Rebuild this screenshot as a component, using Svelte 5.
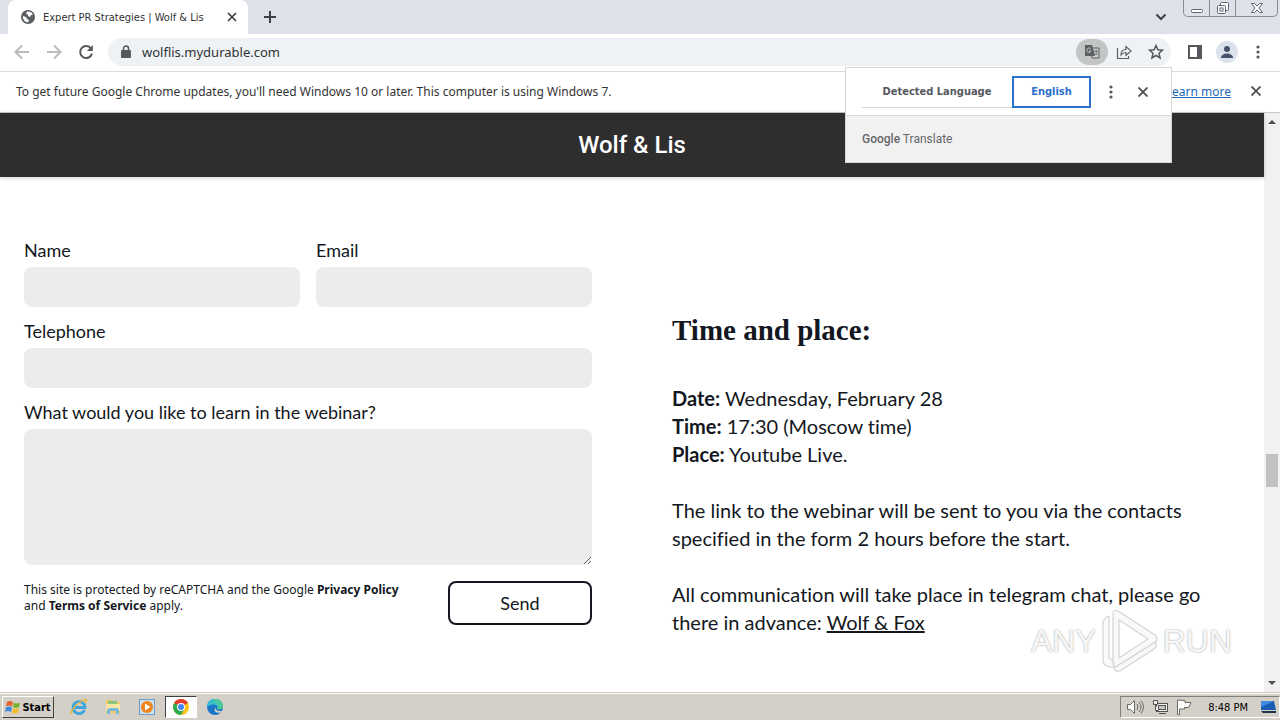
<script>
  let name = $state('');
  let email = $state('');
  let phone = $state('');
  let question = $state('');
</script>

<div class="desktop">
  <header class="tabstrip">
    <div class="tab">
      <svg width="14" height="14" viewBox="0 0 14 14"><circle cx="7" cy="7" r="7" fill="#5a5d61" /><path d="M2 6l3 1 1 2 2 1-1 2.500-3-1-2-3zM6 1.500l4 .5 2 3-2 0-1 2-2-1 0-1.500-2-.5z" fill="#fff" /></svg>
      <span class="tab-title">Expert PR Strategies | Wolf &amp; Lis</span>
      <button aria-label="Close tab"><svg width="10" height="10" viewBox="0 0 10 10"><path d="M1 1l8 8M9 1L1 9" stroke="#3c4043" stroke-width="1.700" /></svg></button>
    </div>
    <button class="newtab" aria-label="New tab"><svg width="12" height="12" viewBox="0 0 12 12"><path d="M6 0v12M0 6h12" stroke="#3c4043" stroke-width="2" /></svg></button>
    <button class="tabsearch" aria-label="Search tabs"><svg width="12" height="8" viewBox="0 0 12 8"><path d="M1.500 1.500L6 6l4.500-4.500" fill="none" stroke="#3c4043" stroke-width="2" /></svg></button>
    <div class="window-controls">
      <button aria-label="Minimize"><svg width="14" height="13" viewBox="0 0 14 13"><rect x="1.500" y="7.500" width="11" height="3" rx="1" fill="#fff" stroke="#60646c" /></svg></button>
      <button aria-label="Restore"><svg width="14" height="14" viewBox="0 0 14 14"><rect x="4.500" y="1.500" width="8" height="8" rx="1" fill="#fff" stroke="#60646c" /><rect x="1.500" y="4.500" width="8" height="8" rx="1" fill="#fff" stroke="#60646c" /><rect x="4" y="7" width="3" height="3" fill="none" stroke="#60646c" /></svg></button>
      <button class="wide" aria-label="Close"><svg width="14" height="12" viewBox="0 0 14 12"><path d="M1.500 1.500h3L7 4l2.500-2.500h3L9 6l3.500 4.500h-3L7 8l-2.500 2.500h-3L5 6z" fill="#fff" stroke="#60646c" /></svg></button>
    </div>
  </header>

  <nav class="toolbar">
    <button aria-label="Back"><svg width="16" height="16" viewBox="0 0 16 16" class="faint"><path d="M15 8H2M8 1.500L1.500 8 8 14.500" /></svg></button>
    <button aria-label="Forward"><svg width="16" height="16" viewBox="0 0 16 16" class="faint"><path d="M1 8h13M8 1.500L14.500 8 8 14.500" /></svg></button>
    <button aria-label="Reload"><svg width="16" height="16" viewBox="0 0 16 16"><path d="M13 4.500A6 6 0 1 0 14 9.500" fill="none" stroke="#55585c" stroke-width="2" /><path d="M14.800 1v6H8.800z" fill="#55585c" /></svg></button>
    <div class="omnibox">
      <svg width="10" height="13" viewBox="0 0 10 13"><rect y="5" width="10" height="8" rx="1" fill="#55585c" /><path d="M2.500 5.500V3.500a2.500 2.500 0 0 1 5 0v2" fill="none" stroke="#55585c" stroke-width="1.500" /></svg>
      <input type="text" value="wolflis.mydurable.com" aria-label="Address" />
      <button class="translate-pill" aria-label="Translate this page"><svg width="16" height="16" viewBox="0 0 16 16"><path d="M6 4h9v10H8z" fill="#c9cac9" stroke="#5b5f63" /><path d="M1 1h7l3 11H1z" fill="#5b5f63" /><path d="M6.800 5A2.200 2.200 0 1 0 7 7H5" fill="none" stroke="#c9cac9" /><path d="M9.500 7H14M12 6v1M13 7c0 2-1 3-2.500 4M11 8.500l2.500 2.500" fill="none" stroke="#5b5f63" stroke-width=".8" /></svg></button>
      <button aria-label="Share"><svg width="16" height="16" viewBox="0 0 16 16"><path d="M1.500 4v10.500h11V12M5 11c0-4 2-5.500 5-5.500V2.500L15 7l-5 4.500V8.500C8 8.500 6.500 9 5 11z" fill="none" stroke="#5b5f63" stroke-width="1.200" /></svg></button>
      <button aria-label="Bookmark this page"><svg width="16" height="16" viewBox="0 0 16 16"><path d="M8 1.500l1.900 4.300 4.600.4-3.500 3.100 1.100 4.700L8 11.500 3.900 14 5 9.300 1.500 6.200l4.600-.4z" fill="none" stroke="#55585c" stroke-width="1.500" /></svg></button>
    </div>
    <button aria-label="Side panel"><svg width="14" height="14" viewBox="0 0 14 14"><rect x="1" y="1" width="12" height="12" fill="none" stroke="#55585c" stroke-width="2" /><path d="M9 1h4v12H9z" fill="#55585c" /></svg></button>
    <button class="avatar" aria-label="Profile"><svg width="12" height="12" viewBox="0 0 12 12"><circle cx="6" cy="3" r="3" fill="#47516b" /><path d="M0 12c0-6 12-6 12 0z" fill="#47516b" /></svg></button>
    <button aria-label="Menu"><svg width="4" height="14" viewBox="0 0 4 14" fill="#55585c"><circle cx="2" cy="2" r="1.600" /><circle cx="2" cy="7" r="1.600" /><circle cx="2" cy="12" r="1.600" /></svg></button>
  </nav>

  <div class="infobar">
    <p>To get future Google Chrome updates, you'll need Windows 10 or later. This computer is using Windows 7.</p>
    <a href="#learn">Learn more</a>
    <button aria-label="Dismiss"><svg width="10" height="10" viewBox="0 0 10 10"><path d="M.5.5l9 9M9.500.5l-9 9" stroke="#4c4f53" stroke-width="1.800" /></svg></button>
  </div>

  <section class="translate" aria-label="Translate">
    <div class="languages">
      <button class="detected">Detected Language</button>
      <button class="target">English</button>
      <button class="icon" aria-label="Translate options"><svg width="4" height="14" viewBox="0 0 4 14" fill="#55585c"><circle cx="2" cy="2" r="1.600" /><circle cx="2" cy="7" r="1.600" /><circle cx="2" cy="12" r="1.600" /></svg></button>
      <button class="icon" aria-label="Close translate"><svg width="10" height="10" viewBox="0 0 10 10"><path d="M.5.5l9 9M9.500.5l-9 9" stroke="#4c4f53" stroke-width="1.800" /></svg></button>
    </div>
    <div class="brand"><b>Google</b> Translate</div>
  </section>

  <div class="viewport">
    <div class="page">
      <header class="site-header"><h1>Wolf &amp; Lis</h1></header>
      <main>
        <form onsubmit={(e) => e.preventDefault()}>
          <div class="pair">
            <div class="field"><label for="name">Name</label><input id="name" type="text" bind:value={name} /></div>
            <div class="field"><label for="email">Email</label><input id="email" type="email" bind:value={email} /></div>
          </div>
          <div class="field"><label for="phone">Telephone</label><input id="phone" type="tel" bind:value={phone} /></div>
          <div class="field"><label for="question">What would you like to learn in the webinar?</label><textarea id="question" bind:value={question}></textarea></div>
          <div class="submit">
            <p>This site is protected by reCAPTCHA and the Google <a href="#privacy">Privacy Policy</a><br />and <a href="#terms">Terms of Service</a> apply.</p>
            <button>Send</button>
          </div>
        </form>
        <article>
          <h2>Time and place:</h2>
          <p><strong>Date:</strong> Wednesday, February 28<br /><strong>Time:</strong> 17:30 (Moscow time)<br /><strong>Place:</strong> Youtube Live.</p>
          <p>The link to the webinar will be sent to you via the contacts<br />specified in the form 2 hours before the start.</p>
          <p>All communication will take place in telegram chat, please go<br />there in advance: <a href="#chat">Wolf &amp; Fox</a></p>
        </article>
      </main>
      <div class="watermark" aria-hidden="true">
        <span>ANY</span>
        <svg width="58" height="64" viewBox="0 0 58 64" fill="#f7f7f7" fill-opacity=".8" stroke="#d4d4d4" stroke-width="1.200" stroke-linejoin="round"><path d="M2 14q0-5 6-7v42l6 4v5Q2 59 2 51z" /><path fill-rule="evenodd" d="M12 5q0-5 5-3l37 24q4 4 0 8L17 57q-5 2-5-3zM18 11v38l29-19z" /><path d="M13 59l41-26q3 4-1 7L19 62q-5 1-6-3z" /></svg>
        <span>RUN</span>
      </div>
    </div>
    <div class="scrollbar">
      <svg width="8" height="4" viewBox="0 0 8 4"><path d="M0 4l4-4 4 4z" fill="#505050" /></svg>
      <div class="track"><div class="thumb"></div></div>
      <svg width="8" height="4" viewBox="0 0 8 4"><path d="M0 0l4 4 4-4z" fill="#505050" /></svg>
    </div>
  </div>

  <footer class="taskbar">
    <button class="start"><svg width="16" height="16" viewBox="0 0 16 16"><path d="M2 3q3-2 6 0L7 7.500q-3-2-6 0z" fill="#e8602c" /><path d="M9 3.500q3 2 6 0L14 8q-3 2-6 0z" fill="#78b52b" /><path d="M1 8.500q3-2 6 0L6 13q-3-2-6 0z" fill="#3b8ede" /><path d="M8 9q3 2 6 0l-1 4.500q-3 2-6 0z" fill="#f4bd27" /></svg>Start</button>
    <button class="task" aria-label="Internet Explorer"><svg width="18" height="18" viewBox="0 0 18 18"><path d="M14.500 12A6 6 0 1 1 15 9.500H5" fill="none" stroke="#3da5e1" stroke-width="2.800" /><path d="M2 15C-1 18 3 8 10 4s8-3 5 1" fill="none" stroke="#e6b52e" stroke-width="1.300" /></svg></button>
    <button class="task" aria-label="Windows Explorer"><svg width="18" height="18" viewBox="0 0 18 18"><path d="M2 2h6l1 2h7v11H2z" fill="#eccb66" /><path d="M4 3h9v4H4z" fill="#8cc47b" /><path d="M2 6h14v7H2z" fill="#f8e7a3" /><path d="M3 16v-3q0-3 3-3h6q3 0 3 3v3h-3v-3H6v3z" fill="#76b9dd" /></svg></button>
    <button class="task" aria-label="Media Player"><svg width="18" height="18" viewBox="0 0 18 18"><rect x="1.500" y="1.500" width="15" height="15" fill="#c8e1f3" stroke="#719dc0" /><circle cx="9" cy="9" r="6" fill="#f28319" /><path d="M7 5.500l5.500 3.500L7 12.500z" fill="#fff" /></svg></button>
    <button class="task active" aria-label="Google Chrome"><svg width="16" height="16" viewBox="0 0 16 16"><circle cx="8" cy="8" r="8" fill="#fbc116" /><path d="M8 8L1.100 4A8 8 0 0 1 14.900 4z" fill="#e33b2e" /><path d="M1.100 4A8 8 0 0 0 8 16l3.500-6L8 8z" fill="#2da94f" /><circle cx="8" cy="8" r="4" fill="#fff" /><circle cx="8" cy="8" r="3" fill="#4284f3" /></svg></button>
    <button class="task" aria-label="Microsoft Edge"><svg width="16" height="16" viewBox="0 0 16 16"><circle cx="8" cy="8" r="8" fill="#1875c8" /><path d="M0 8a8 8 0 0 1 16-1c0 3-3 4-6 3 2-4-4-7-10-2z" fill="#35bdd0" /><path d="M8 0c5 0 8 3 8 7s-4 4-6 3c3-4 0-7-5-7z" fill="#5bd077" opacity=".6" /><path d="M9 8.500c-1 2 1 4 6 3.500l-2 2C8 14 6 11 9 8.500z" fill="#d4d0c8" /></svg></button>
    <div class="tray">
      <svg width="18" height="16" viewBox="0 0 18 16" fill="#fff" stroke="#696866"><path d="M1.500 5.500h3l4-4v13l-4-4h-3z" /><path d="M11 5q2 3 0 6M13 3q4 5 0 10M15 1.500q5 6 0 13" fill="none" /></svg>
      <svg width="16" height="16" viewBox="0 0 16 16" fill="#eee" stroke="#55534f"><rect x="4.500" y="4.500" width="11" height="8" /><rect x="6.500" y="6.500" width="7" height="4" fill="#c9c6c0" /><path d="M7 14.500h7M1.500 1.500h4v4h-4zM3.500 5.500v6h3" /></svg>
      <svg width="16" height="16" viewBox="0 0 16 16" fill="#fff" stroke="#696866"><path d="M1.500 1v14.500h2V10h5v-1.500h4l2.500-5H9V1.500z" /></svg>
      <time>8:48 PM</time>
      <svg width="16" height="14" viewBox="0 0 16 14"><path d="M1 1h13l2 9H1z" fill="#1c5db4" /><path d="M1 1h13l-13 6z" fill="#3f8cde" /><path d="M1 11h15v2H3z" fill="#20344c" /></svg>
    </div>
  </footer>
</div>

<style>
  :global(body) { margin: 0; }
  * { box-sizing: border-box; }
  button { font: inherit; color: inherit; border: 0; background: none; padding: 0; display: flex; align-items: center; justify-content: center; flex-shrink: 0; }
  svg { flex-shrink: 0; display: block; }
  p, h1, h2 { margin: 0; }
  .desktop { position: relative; min-height: 100vh; display: flex; flex-direction: column; background: #fff; font-family: "Noto Sans", "Open Sans", sans-serif; font-size: 12px; color: #333; }

  .tabstrip { height: 34px; background: #dee1e9; display: flex; align-items: center; padding-left: 8px; }
  .tab { width: 240px; height: 34px; background: #fff; border-radius: 8px 8px 0 0; display: flex; align-items: center; gap: 8px; padding: 0 11px 0 13px; font-family: "DejaVu Sans Condensed", "DejaVu Sans", sans-serif; font-size: 11px; }
  .tab-title { flex: 1; white-space: nowrap; }
  .newtab { margin-left: 16px; }
  .tabsearch { margin-left: auto; margin-right: 16px; }
  .window-controls { display: flex; align-self: flex-start; border: 1px solid #888c96; border-top: 0; border-radius: 0 0 5px 5px; margin-right: 2px; }
  .window-controls button { width: 26px; height: 16px; border-right: 1px solid #888c96; }
  .window-controls .wide { width: 41px; border: 0; }

  .toolbar { height: 38px; display: flex; align-items: center; gap: 16px; padding: 0 20px 2px 14px; border-bottom: 1px solid #d9dadd; }
  .faint { fill: none; stroke: #b9bbbd; stroke-width: 2; }
  .omnibox { flex: 1; height: 28px; border-radius: 14px; background: #eff2f5; display: flex; align-items: center; gap: 16px; padding: 0 7px 0 13px; margin: 0 1px 0 -2px; }
  .omnibox input { flex: 1; min-width: 0; border: 0; background: none; padding: 0; margin-left: -5px; font-family: "Noto Sans", sans-serif; font-size: 13px; color: #303236; outline: 0; }
  .translate-pill { width: 32px; height: 26px; border-radius: 13px; background: #c3c5c5; margin-right: -8px; }
  .avatar { width: 22px; height: 22px; border-radius: 50%; background: #dce2ec; margin: 0 2px 0 -2px; }

  .infobar { height: 41px; display: flex; align-items: center; padding: 0 19px 2px 16px; border-bottom: 1px solid #c8c8c8; }
  .infobar p { flex: 1; }
  .infobar a { color: #2368b5; margin-right: 20px; }

  .translate { position: absolute; top: 67px; right: 108px; width: 327px; background: #fff; border: 1px solid #d5d5d5; z-index: 2; }
  .languages { height: 47px; display: flex; align-items: center; padding-left: 16px; font-family: "DejaVu Sans Condensed", "DejaVu Sans", sans-serif; font-weight: bold; font-size: 11px; color: #55585c; }
  .detected { width: 150px; height: 32px; border-bottom: 1px solid #d5d5d5; }
  .target { width: 79px; height: 32px; border: 2px solid #2a70cc; color: #2a70cc; }
  .icon { width: 32px; height: 32px; margin-left: 4px; }
  .icon + .icon { margin-left: 0; }
  .brand { height: 47px; line-height: 46px; padding-left: 16px; background: #f1f1f1; border-top: 1px solid #d8d8d8; font-family: Roboto, sans-serif; font-size: 12px; color: #66686b; }
  .brand b { font-weight: 500; }

  .viewport { flex: 1; display: flex; }
  .page { flex: 1; position: relative; color: #131721; font-family: Lato, sans-serif; font-variant-ligatures: none; }
  .site-header { height: 64px; background: #2e2e2e; color: #fff; display: flex; align-items: center; justify-content: center; box-shadow: 0 1px 4px #0003; }
  h1 { font-family: Roboto, sans-serif; font-weight: 500; font-size: 24px; }
  main { display: grid; grid-template-columns: 1fr 1fr; gap: 80px; padding: 61px 24px 0; }
  form { display: flex; flex-direction: column; gap: 12px; font-size: 18px; }
  .pair { display: grid; grid-template-columns: 1fr 1fr; gap: 16px; }
  .field { display: flex; flex-direction: column; gap: 4px; }
  label { line-height: 25px; }
  .field input, textarea { width: 100%; height: 40px; border: 0; border-radius: 8px; background: #ececec; padding: 8px 12px; font: inherit; }
  textarea { height: 136px; resize: vertical; display: block; }
  .submit { display: flex; justify-content: space-between; margin-top: 4px; }
  .submit p { font-family: "Noto Sans", sans-serif; font-size: 12px; line-height: 16px; padding-top: 1px; }
  .submit a { color: inherit; font-weight: bold; text-decoration: none; }
  .submit button { width: 144px; height: 44px; border: 2px solid #131721; border-radius: 8px; }
  article { padding-top: 72px; font-size: 20px; line-height: 28px; }
  article p + p { margin-top: 28px; }
  article a { color: inherit; }
  h2 { font-family: "Liberation Serif", serif; font-weight: bold; font-size: 29px; line-height: 40px; margin-bottom: 34px; }
  .watermark { position: absolute; right: 32px; bottom: 19px; display: flex; align-items: center; gap: 4px; font-family: "Liberation Sans", sans-serif; font-size: 32px; color: #f7f7f7; text-shadow: 0 0 2px #999; }

  .scrollbar { width: 16px; background: #f1f1f1; display: flex; flex-direction: column; align-items: center; padding: 7px 0; }
  .track { flex: 1; width: 12px; display: grid; grid-template-rows: 329fr 33px 194fr; }
  .thumb { grid-row: 2; background: #c1c1c1; }

  .taskbar { height: 28px; border-top: 1px solid #c9c3bb; background: #d4d0c8; box-shadow: inset 0 1px #fff; display: flex; align-items: center; padding: 1px 0 0 2px; font-family: "DejaVu Sans Condensed", "DejaVu Sans", sans-serif; font-size: 11px; color: #000; }
  .start { width: 52px; height: 22px; gap: 1px; border: 1px solid; border-color: #fff #404040 #404040 #fff; font-weight: bold; margin-right: 8px; }
  .task { width: 34px; height: 22px; }
  .active { width: 32px; margin: 0 1px; background: #fff; border: 1px solid; border-color: #404040 #fff #fff #404040; }
  .tray { margin-left: auto; height: 22px; display: flex; align-items: center; gap: 8px; padding: 0 3px 0 5px; border: 1px solid; border-color: #808080 #fff #fff #808080; }
  time { margin: 0 4px 0 8px; }
</style>
